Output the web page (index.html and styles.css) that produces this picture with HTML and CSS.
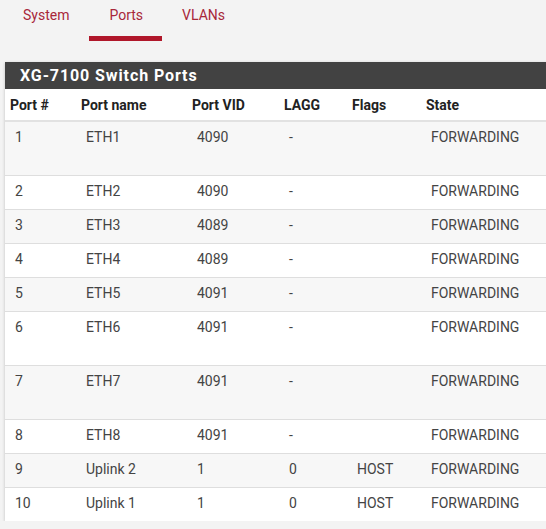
FILE: index.html
```html
<!DOCTYPE html>
<html>
<head>
<meta charset="utf-8">
<link rel="stylesheet" href="styles.css">
</head>
<body>
<nav class="tabs">
  <a class="tab">System</a>
  <a class="tab active">Ports</a>
  <a class="tab">VLANs</a>
</nav>
<section class="panel">
  <h2 class="panel-title">XG-7100 Switch Ports</h2>
  <table class="ports">
    <colgroup>
      <col class="c1"><col class="c2"><col class="c3"><col class="c4"><col class="c5"><col class="c6">
    </colgroup>
    <thead>
      <tr><th>Port #</th><th>Port name</th><th>Port VID</th><th>LAGG</th><th>Flags</th><th>State</th></tr>
    </thead>
    <tbody>
      <tr class="tall"><td>1</td><td>ETH1</td><td>4090</td><td>-</td><td></td><td>FORWARDING</td></tr>
      <tr><td>2</td><td>ETH2</td><td>4090</td><td>-</td><td></td><td>FORWARDING</td></tr>
      <tr><td>3</td><td>ETH3</td><td>4089</td><td>-</td><td></td><td>FORWARDING</td></tr>
      <tr><td>4</td><td>ETH4</td><td>4089</td><td>-</td><td></td><td>FORWARDING</td></tr>
      <tr><td>5</td><td>ETH5</td><td>4091</td><td>-</td><td></td><td>FORWARDING</td></tr>
      <tr class="tall"><td>6</td><td>ETH6</td><td>4091</td><td>-</td><td></td><td>FORWARDING</td></tr>
      <tr class="tall"><td>7</td><td>ETH7</td><td>4091</td><td>-</td><td></td><td>FORWARDING</td></tr>
      <tr><td>8</td><td>ETH8</td><td>4091</td><td>-</td><td></td><td>FORWARDING</td></tr>
      <tr><td>9</td><td>Uplink 2</td><td>1</td><td>0</td><td>HOST</td><td>FORWARDING</td></tr>
      <tr><td>10</td><td>Uplink 1</td><td>1</td><td>0</td><td>HOST</td><td>FORWARDING</td></tr>
    </tbody>
  </table>
</section>
</body>
</html>
```

FILE: styles.css
```css
html, body {
  margin: 0;
  padding: 0;
  overflow: hidden;
}
body {
  background: #f3f3f3;
  font-family: Roboto, "Liberation Sans", sans-serif;
  font-size: 14px;
  color: #444;
}
.tabs {
  display: flex;
  padding-left: 3px;
  height: 41px;
}
.tab {
  display: block;
  padding: 7px 20px 0;
  line-height: 17px;
  color: #a8273a;
  font-size: 14px;
  box-sizing: border-box;
  height: 41px;
  border-bottom: 5px solid transparent;
}
.tab:nth-child(2) {
  padding-right: 19px;
}
.tab.active {
  border-bottom-color: #b0172a;
}
.panel {
  margin: 21px 0 0 5px;
  width: 600px;
  background: #fff;
  box-shadow: 0 1px 3px rgba(0,0,0,0.22);
}
.panel-title {
  margin: 0;
  background: #424242;
  color: #fff;
  font-size: 16px;
  font-weight: 700;
  height: 27px;
  line-height: 27px;
  padding-left: 15px;
  letter-spacing: 0.9px;
}
.ports {
  border-collapse: collapse;
  width: 100%;
  table-layout: fixed;
}
.c1 { width: 71px; }
.c2 { width: 111px; }
.c3 { width: 92px; }
.c4 { width: 68px; }
.c5 { width: 74px; }
.ports th {
  text-align: left;
  font-weight: 700;
  color: #222;
  padding: 6px 5px 5px;
  line-height: 20px;
  height: 20px;
  border-bottom: 2px solid #e2e2e2;
}
.ports td {
  padding: 5px 10px 8px;
  line-height: 20px;
  vertical-align: top;
  border-top: 1px solid #dedede;
  white-space: nowrap;
}
.ports tbody tr:first-child td {
  border-top: none;
}
.ports tbody tr:nth-child(odd) {
  background: #f7f7f7;
}
.ports tr.tall td {
  height: 40px;
}
```
